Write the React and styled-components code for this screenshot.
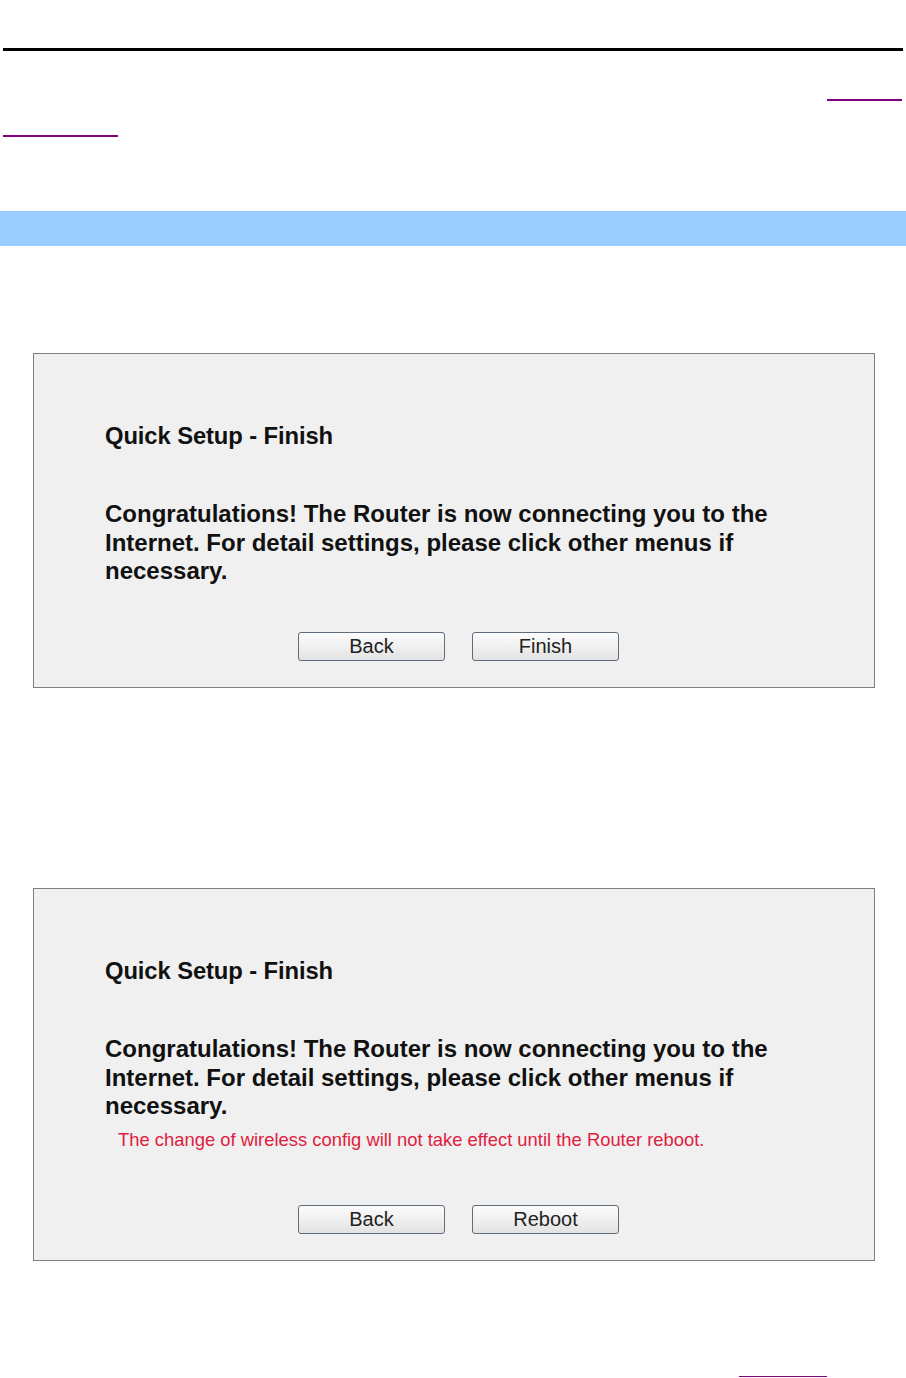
import React from "react";
import styled, { createGlobalStyle } from "styled-components";

const GlobalStyle = createGlobalStyle`
  html, body {
    margin: 0;
    padding: 0;
    background: #ffffff;
  }
  body {
    font-family: "Liberation Sans", Arial, sans-serif;
  }
`;

const Page = styled.div`
  width: 906px;
  height: 1378px;
  overflow: hidden;
  display: flex;
  flex-direction: column;
`;

const Rule = styled.hr`
  margin: 48px 3px 0 3px;
  height: 3px;
  border: 0;
  background: #000000;
`;

const LinkRow = styled.div`
  display: flex;
  justify-content: ${(props) => (props.right ? "flex-end" : "flex-start")};
  padding: 0 4px 0 ${(props) => props.indent || 3}px;
  margin-top: ${(props) => props.top}px;
`;

// hyperlink in the manual, only its underline shows in the capture
const DocLink = styled.a`
  display: block;
  width: ${(props) => props.w}px;
  height: 0;
  border-bottom: ${(props) => props.thick || 2}px solid #800080;
`;

const SectionBar = styled.div`
  margin-top: 74px;
  height: 35px;
  background: #99ccff;
`;

const Shot = styled.div`
  box-sizing: border-box;
  margin: ${(props) => props.top}px 0 0 33px;
  width: 842px;
  height: ${(props) => props.h}px;
  border: 1px solid #808080;
  background: #f0f0f0;
  padding: 67px 0 0 71px;
  color: #111111;
`;

const Title = styled.div`
  font-size: 23.8px;
  font-weight: bold;
  line-height: 29px;
  letter-spacing: -0.1px;
`;

const Message = styled.p`
  margin: 50px 0 0 0;
  width: 700px;
  font-size: 24px;
  font-weight: bold;
  line-height: 28.5px;
`;

const Notice = styled.p`
  margin: 9px 0 0 13px;
  font-size: 18.4px;
  line-height: 20px;
  color: #e02040;
`;

const Buttons = styled.div`
  display: flex;
  gap: 27px;
  margin-top: ${(props) => props.top}px;
  padding-left: 193px;
`;

const Button = styled.button`
  box-sizing: border-box;
  width: 147px;
  height: 29px;
  padding: 0;
  border: 1px solid #5e6c7c;
  border-radius: 3px;
  background: linear-gradient(#fcfcfc, #f0f0f0 50%, #e2e2e2);
  font-family: "Liberation Sans", Arial, sans-serif;
  font-size: 20px;
  line-height: 27px;
  color: #222222;
`;

const Finish = ({ notice, right }) => (
  <>
    <Title>Quick Setup - Finish</Title>
    <Message>
      Congratulations! The Router is now connecting you to the Internet. For
      detail settings, please click other menus if necessary.
    </Message>
    {notice && <Notice>{notice}</Notice>}
    <Buttons top={notice ? 55 : 46}>
      <Button>Back</Button>
      <Button>{right}</Button>
    </Buttons>
  </>
);

export default function App() {
  return (
    <Page>
      <GlobalStyle />
      <Rule />
      <LinkRow right top={48}>
        <DocLink href="#" w={75} />
      </LinkRow>
      <LinkRow top={34}>
        <DocLink href="#" w={115} />
      </LinkRow>
      <SectionBar />
      <Shot top={107} h={335}>
        <Finish right="Finish" />
      </Shot>
      <Shot top={200} h={373}>
        <Finish
          right="Reboot"
          notice="The change of wireless config will not take effect until the Router reboot."
        />
      </Shot>
      <LinkRow top={115} indent={739}>
        <DocLink href="#" w={88} thick={1} />
      </LinkRow>
    </Page>
  );
}
